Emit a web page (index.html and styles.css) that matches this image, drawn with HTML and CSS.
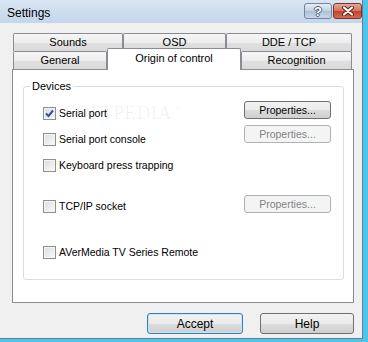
FILE: index.html
```html
<!DOCTYPE html>
<html lang="en">
<head>
    <meta charset="UTF-8">
    <title>Settings</title>
    <link rel="stylesheet" href="styles.css">
</head>
<body>
    <div class="window">
        <div class="titlebar">
            <span class="title">Settings</span>
            <div class="caption-buttons">
                <span class="cap-btn help">?</span>
                <span class="cap-btn close">
                    <svg width="14" height="10" viewBox="0 0 14 10">
                        <path d="M3 1.5 L11 8.5 M11 1.5 L3 8.5" stroke="#5a1d14" stroke-width="4" stroke-linecap="round"/>
                        <path d="M3 1.5 L11 8.5 M11 1.5 L3 8.5" stroke="#fff" stroke-width="2.2" stroke-linecap="round"/>
                    </svg>
                </span>
            </div>
        </div>

        <div class="client">
            <div class="tab-row">
                <span class="tab sounds">Sounds</span>
                <span class="tab osd">OSD</span>
                <span class="tab dde">DDE / TCP</span>
            </div>
            <div class="tab-row">
                <span class="tab general">General</span>
                <span class="tab origin active">Origin of control</span>
                <span class="tab recognition">Recognition</span>
            </div>

            <div class="panel">
                <div class="watermark">SOFTPEDIA<sup>™</sup></div>
                <fieldset class="group">
                    <legend>Devices</legend>
                    <div class="devices">
                        <div class="device row-1">
                            <label class="check">
                                <span class="box checked">
                                    <svg width="9" height="9" viewBox="0 0 9 9"><path d="M1 4.5 L3.5 7 L8 1.5" fill="none" stroke="#34508f" stroke-width="2"/></svg>
                                </span>
                                Serial port
                            </label>
                            <button class="btn">Properties...</button>
                        </div>
                        <div class="device row-2">
                            <label class="check"><span class="box"></span>Serial port console</label>
                            <button class="btn" disabled>Properties...</button>
                        </div>
                        <div class="device row-3">
                            <label class="check"><span class="box"></span>Keyboard press trapping</label>
                        </div>
                        <div class="device row-4">
                            <label class="check"><span class="box"></span>TCP/IP socket</label>
                            <button class="btn" disabled>Properties...</button>
                        </div>
                        <div class="device row-5">
                            <label class="check"><span class="box"></span>AVerMedia TV Series Remote</label>
                        </div>
                    </div>
                </fieldset>
            </div>

            <div class="actions">
                <button class="btn action default">Accept</button>
                <button class="btn action">Help</button>
            </div>
        </div>
    </div>
</body>
</html>
```

FILE: styles.css
```css
body {
    margin: 0;
    width: 368px;
    height: 342px;
    overflow: hidden;
    background-color: #4cc6ea;
    font-family: "Liberation Sans", Arial, sans-serif;
    font-size: 11px;
    color: #000;
}
.window {
    width: 362px;
    height: 338px;
    border-right: 1px solid #6d7d8e;
    border-bottom: 1px solid #6d7d8e;
    background-color: #f0f0f0;
    display: flex;
    flex-direction: column;
}
.titlebar {
    flex: none;
    height: 23px;
    display: flex;
    justify-content: space-between;
    align-items: flex-start;
    padding-left: 7px;
    background: linear-gradient(#d8e5f3, #c4d6eb);
}
.title {
    font-size: 12px;
    line-height: 26px;
}
.caption-buttons {
    display: flex;
    margin-top: 3px;
}
.cap-btn {
    box-sizing: border-box;
    height: 16px;
    display: flex;
    align-items: center;
    justify-content: center;
    border: 1px solid #72849a;
    border-radius: 3px;
}
.help {
    width: 28px;
    margin-right: 1px;
    background: linear-gradient(#e6edf5, #c2d1e3 50%, #aebfd6 51%, #c9d8ea);
    color: #fff;
    font-size: 13px;
    font-weight: bold;
    text-shadow: 1px 0 0 #4a5d78, -1px 0 0 #4a5d78, 0 1px 0 #4a5d78, 0 -1px 0 #4a5d78;
}
.close {
    width: 29px;
    border-color: #7d352b;
    background: linear-gradient(#e7a99a, #d4705c 50%, #c2432b 51%, #d66a4f);
}
.client {
    flex: 1;
    padding: 10px 8px 0 12px;
}
.tab-row {
    display: flex;
    align-items: flex-start;
    height: 18px;
    margin-left: 1px;
}
.tab {
    box-sizing: border-box;
    height: 18px;
    border: 1px solid #898c95;
    border-bottom: none;
    border-radius: 2px 2px 0 0;
    background: linear-gradient(#f6f6f6, #ededed 50%, #e0e0e0 51%, #dadada);
    text-align: center;
    line-height: 17px;
}
.sounds { width: 110px; }
.osd { width: 103px; }
.dde { width: 126px; }
.general { width: 94px; }
.origin { width: 134px; }
.recognition { width: 111px; }
.tab.active {
    position: relative;
    z-index: 2;
    height: 22px;
    margin-top: -3px;
    background: #fff;
    line-height: 19px;
}
.panel {
    position: relative;
    box-sizing: border-box;
    width: 342px;
    height: 234px;
    border: 1px solid #898c95;
    background-color: #fff;
}
.watermark {
    position: absolute;
    left: 52px;
    top: 32px;
    font-family: "Liberation Serif", "Times New Roman", serif;
    font-size: 19px;
    letter-spacing: 0.5px;
    color: rgba(0, 0, 0, 0.06);
    pointer-events: none;
}
.watermark sup {
    font-size: 8px;
}
.group {
    box-sizing: border-box;
    width: 321px;
    margin: 10px 0 0 10px;
    padding: 0;
    border: 1px solid #d5dfe5;
    border-radius: 3px;
}
.group legend {
    margin-left: 6px;
    padding: 0 2px;
    line-height: 13px;
}
.devices {
    padding: 8px 12px 19px 19px;
    font-size: 10.5px;
}
.device {
    display: flex;
    justify-content: space-between;
    align-items: flex-start;
}
.row-1 { height: 24px; }
.row-2 { height: 28px; }
.row-3 { height: 42px; }
.row-4 { height: 45px; }
.row-5 { height: 20px; }
.check {
    display: flex;
    align-items: center;
    margin-top: 6px;
    line-height: 13px;
}
.row-2 .check { margin-top: 8px; }
.row-4 .check { margin-top: 5px; }
.box {
    box-sizing: border-box;
    width: 13px;
    height: 13px;
    margin-right: 3px;
    border: 1px solid #8e8f8f;
    background: linear-gradient(135deg, #dcdcdc, #fafafa);
    box-shadow: inset 0 0 0 1px #f4f4f4;
    display: flex;
    align-items: center;
    justify-content: center;
}
.box.checked {
    background: linear-gradient(135deg, #d4dbe6, #f6f8fb);
}
.btn {
    box-sizing: border-box;
    width: 87px;
    height: 18px;
    padding: 0;
    border: 1px solid #707070;
    border-radius: 3px;
    background: linear-gradient(#f2f2f2, #ebebeb 50%, #dddddd 51%, #cfcfcf);
    font-family: "Liberation Sans", Arial, sans-serif;
    font-size: 10.5px;
    color: #000;
}
.btn:disabled {
    border-color: #adb2b5;
    background: #f4f4f4;
    color: #838383;
}
.actions {
    display: flex;
    justify-content: flex-end;
    gap: 17px;
    margin-top: 10px;
}
.btn.action {
    width: 94px;
    height: 21px;
    font-size: 12px;
}
.btn.default {
    width: 96px;
    border-color: #3c7fb1;
    box-shadow: inset 0 0 0 1px #bfe6fa;
}
```
